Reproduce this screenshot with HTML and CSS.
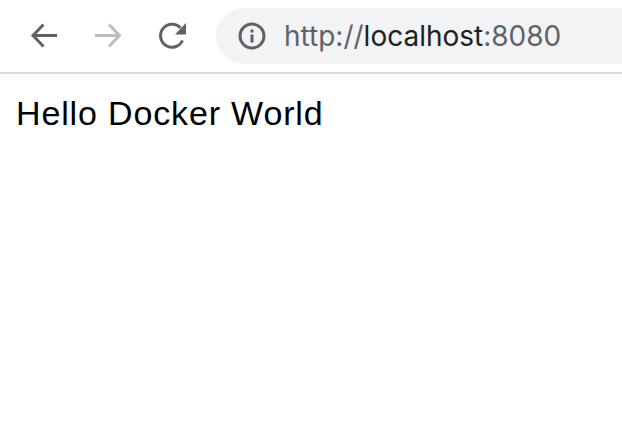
FILE: index.html
```html
<!DOCTYPE html>
<html lang="en">
<head>
<meta charset="utf-8">
<title>Hello Docker World</title>
<link rel="stylesheet" href="styles.css">
</head>
<body>
<header class="toolbar">
  <svg class="nav-icon" width="32" height="32" viewBox="0 0 32 32"><path class="stroke dark" d="M29 15.500H6M15.500 4.500 5 15.500l10.500 11"/></svg>
  <svg class="nav-icon" width="32" height="32" viewBox="0 0 32 32"><path class="stroke light" d="M3 15.500h24M17 4.500l10.500 11-10.500 11"/></svg>
  <svg class="nav-icon" width="32" height="32" viewBox="0 0 32 32"><path class="stroke dark" d="M26.500 20.500A11.500 11.500 0 1 1 24.500 8"/><path class="dark-fill" d="M19 14.500h11V3z"/></svg>
  <div class="omnibox">
    <svg class="info" width="28" height="28" viewBox="0 0 28 28"><circle class="stroke dark" cx="14" cy="14" r="12"/><rect class="dark-fill" x="12.500" y="12.500" width="3" height="8"/><rect class="dark-fill" x="12.500" y="7.500" width="3" height="3"/></svg>
    <span class="url"><span class="dim">http://</span>localhost<span class="dim">:8080</span></span>
  </div>
</header>
<main class="page">Hello Docker World</main>
</body>
</html>
```
FILE: styles.css
```css
* { box-sizing: border-box; }
html, body { margin: 0; padding: 0; background: #fff; overflow: hidden; }
body { width: 622px; height: 444px; }
.toolbar {
  display: flex;
  align-items: center;
  height: 74px;
  padding: 8px 0 8px 28px;
  border-bottom: 2px solid #dcdcdf;
  gap: 32px;
}
.nav-icon { flex: none; display: block; }
.stroke { fill: none; stroke-width: 3; }
.dark { stroke: #5f6368; }
.light { stroke: #bdbdbd; }
.dark-fill { fill: #5f6368; }
.omnibox {
  flex: 1;
  margin-left: -4px;
  height: 56px;
  display: flex;
  align-items: center;
  padding-left: 22px;
  gap: 18px;
  background: #f1f3f4;
  border-radius: 28px 0 0 28px;
}
.info { flex: none; display: block; }
.url {
  font-family: "Inter", "Liberation Sans", sans-serif;
  font-size: 28px;
  color: #202124;
  white-space: nowrap;
}
.dim { color: #5f6368; }
.page {
  font-family: "Liberation Sans", Arial, sans-serif;
  font-size: 34px;
  letter-spacing: 0.85px;
  line-height: 40px;
  color: #000;
  padding: 19px 0 0 16px;
}
```
